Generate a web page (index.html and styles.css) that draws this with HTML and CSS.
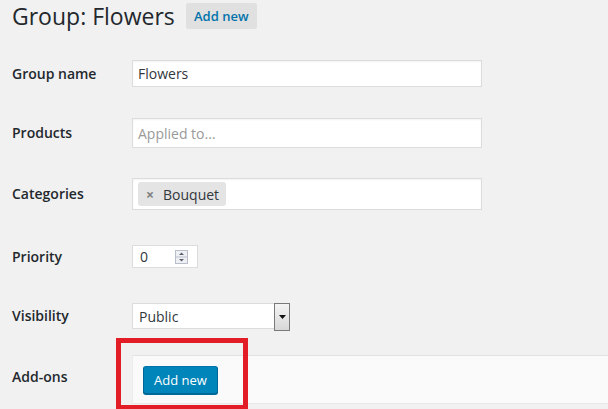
FILE: index.html
```html
<!DOCTYPE html>
<html>
<head>
<meta charset="utf-8">
<link rel="stylesheet" href="styles.css">
</head>
<body>
<div class="header">
  <h1 class="title">Group: Flowers</h1>
  <a class="page-action">Add new</a>
</div>
<div class="form">
  <div class="row row-name">
    <div class="label">Group name</div>
    <div class="field"><div class="input">Flowers</div></div>
  </div>
  <div class="row row-products">
    <div class="label">Products</div>
    <div class="field"><div class="input tall placeholder">Applied to...</div></div>
  </div>
  <div class="row row-cats">
    <div class="label">Categories</div>
    <div class="field"><div class="input tags"><span class="chip"><span class="chip-x">×</span>Bouquet</span></div></div>
  </div>
  <div class="row row-priority">
    <div class="label">Priority</div>
    <div class="field">
      <div class="number">
        <span class="num-val">0</span>
        <span class="spinner">
          <svg width="13" height="14" viewBox="0 0 13 14">
            <rect x="0.5" y="0.5" width="12" height="13" fill="#eef0f4" stroke="#b9bfca"/>
            <line x1="1" y1="7" x2="12" y2="7" stroke="#b9bfca"/>
            <path d="M4 5 L6.5 2.5 L9 5 Z" fill="#5a6070"/>
            <path d="M4 9 L6.5 11.5 L9 9 Z" fill="#5a6070"/>
          </svg>
        </span>
      </div>
    </div>
  </div>
  <div class="row row-vis">
    <div class="label">Visibility</div>
    <div class="field">
      <div class="select">
        <span class="sel-val">Public</span>
        <span class="sel-btn"><svg width="7" height="4" viewBox="0 0 7 4"><path d="M0 0 H7 L3.5 4 Z" fill="#111"/></svg></span>
      </div>
    </div>
  </div>
  <div class="row row-addons">
    <div class="label label-addons">Add-ons</div>
    <div class="panel">
      <a class="btn-primary">Add new</a>
    </div>
    <div class="highlight"></div>
  </div>
</div>
</body>
</html>
```

FILE: styles.css
```css
html, body {
  margin: 0;
  padding: 0;
  background: #f1f1f1;
  font-family: "Open Sans", "Noto Sans", sans-serif;
  color: #23282d;
  overflow: hidden;
  height: 409px;
}

.header {
  display: flex;
  align-items: center;
  height: 32px;
  padding-left: 12px;
}

.title {
  margin: 0;
  font-size: 23px;
  font-weight: 400;
  line-height: 29px;
  color: #23282d;
}

.page-action {
  margin-left: 11px;
  height: 26px;
  width: 71px;
  display: flex;
  align-items: center;
  justify-content: center;
  background: #e0e0e0;
  border-radius: 2px;
  color: #0073aa;
  font-size: 13px;
  font-weight: 600;
}

.form {
  padding-left: 12px;
}

.row {
  display: grid;
  grid-template-columns: 120px 1fr;
  align-items: center;
  position: relative;
}

.row-name { margin-top: 28px; }
.row-products { margin-top: 31px; }
.row-cats { margin-top: 30px; }
.row-priority { margin-top: 35px; }
.row-vis { margin-top: 35px; }
.row-addons { margin-top: 26px; }

.label {
  font-size: 14px;
  font-weight: 600;
  color: #23282d;
  margin-bottom: 1px;
}

.label-addons {
  margin-bottom: 6px;
}

.input {
  box-sizing: border-box;
  width: 350px;
  height: 27px;
  background: #fff;
  border: 1px solid #dcdcdc;
  box-shadow: inset 0 1px 2px rgba(0,0,0,0.05);
  font-size: 14px;
  color: #32373c;
  display: flex;
  align-items: center;
  padding-left: 5px;
}

.input.tall { height: 30px; }
.placeholder { color: #9a9a9a; }

.input.tags {
  height: 32px;
  padding-left: 5px;
}

.chip {
  display: inline-flex;
  align-items: center;
  height: 24px;
  width: 88px;
  box-sizing: border-box;
  background: #e4e4e4;
  border-radius: 3px;
  padding-left: 8px;
  color: #32373c;
  font-size: 14px;
}

.chip-x {
  color: #808080;
  font-weight: 700;
  font-size: 14px;
  margin-right: 9px;
}

.number {
  box-sizing: border-box;
  width: 66px;
  height: 23px;
  background: #fff;
  border: 1px solid #dcdcdc;
  display: flex;
  align-items: center;
  justify-content: space-between;
  padding: 0 9px 0 7px;
  font-size: 14px;
  color: #32373c;
}

.spinner { display: flex; }

.select {
  box-sizing: border-box;
  width: 158px;
  height: 26px;
  background: #fff;
  border: 1px solid #dcdcdc;
  display: flex;
  align-items: stretch;
  justify-content: space-between;
  font-size: 14px;
  color: #32373c;
}

.sel-val {
  display: flex;
  align-items: center;
  padding-left: 6px;
}

.sel-btn {
  width: 16px;
  box-sizing: border-box;
  margin: -1px -1px -1px 0;
  border: 1px solid #7a7a7a;
  background: linear-gradient(#f4f4f4, #d8d8d8);
  display: flex;
  align-items: center;
  justify-content: center;
  height: 28px;
}

.panel {
  height: 49px;
  background: #fafafa;
  border-top: 1px solid #e2e2e2;
  border-bottom: 1px solid #e8e8e8;
  border-left: 1px solid #ececec;
  box-sizing: border-box;
  display: flex;
  align-items: center;
  padding-left: 10px;
}

.btn-primary {
  box-sizing: border-box;
  width: 75px;
  height: 28px;
  background: #0085ba;
  border: 1px solid #0073aa;
  border-color: #0073aa #006799 #006799;
  box-shadow: 0 1px 0 #006799;
  border-radius: 3px;
  color: #fff;
  font-size: 13px;
  display: flex;
  align-items: center;
  justify-content: center;
}

.highlight {
  position: absolute;
  left: 104px;
  top: -17px;
  width: 132px;
  height: 72px;
  box-sizing: border-box;
  border: 5px solid #e21d25;
}
```
